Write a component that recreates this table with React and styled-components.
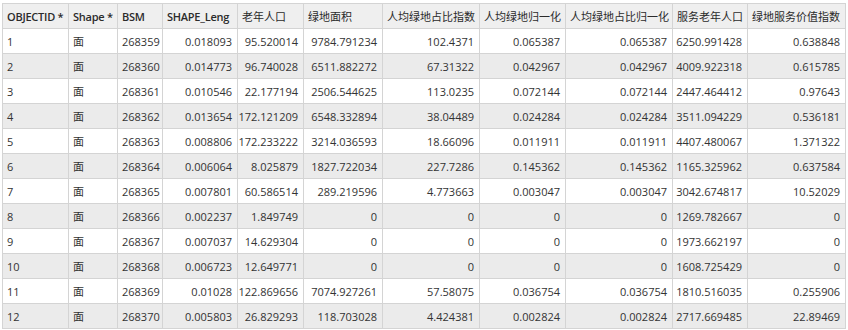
import React from "react";
import styled, { createGlobalStyle } from "styled-components";

const GlobalStyle = createGlobalStyle`
  html, body {
    margin: 0;
    padding: 0;
    background: #ffffff;
  }
`;

const columns = [
  { key: "oid", label: "OBJECTID *", width: 66, align: "left", latin: true },
  { key: "shape", label: "Shape *", width: 49, align: "left", latin: true },
  { key: "bsm", label: "BSM", width: 45, align: "left", latin: true },
  { key: "len", label: "SHAPE_Leng", width: 75, align: "right", latin: true },
  { key: "old", label: "老年人口", width: 66, align: "right" },
  { key: "area", label: "绿地面积", width: 79, align: "right" },
  { key: "ratio", label: "人均绿地占比指数", width: 97, align: "right" },
  { key: "norm", label: "人均绿地归一化", width: 86, align: "right" },
  { key: "ratioNorm", label: "人均绿地占比归一化", width: 107, align: "right" },
  { key: "served", label: "服务老年人口", width: 75, align: "right" },
  { key: "value", label: "绿地服务价值指数", width: 98, align: "right" },
];

const rows = [
  ["1", "面", "268359", "0.018093", "95.520014", "9784.791234", "102.4371", "0.065387", "0.065387", "6250.991428", "0.638848"],
  ["2", "面", "268360", "0.014773", "96.740028", "6511.882272", "67.31322", "0.042967", "0.042967", "4009.922318", "0.615785"],
  ["3", "面", "268361", "0.010546", "22.177194", "2506.544625", "113.0235", "0.072144", "0.072144", "2447.464412", "0.97643"],
  ["4", "面", "268362", "0.013654", "172.121209", "6548.332894", "38.04489", "0.024284", "0.024284", "3511.094229", "0.536181"],
  ["5", "面", "268363", "0.008806", "172.233222", "3214.036593", "18.66096", "0.011911", "0.011911", "4407.480067", "1.371322"],
  ["6", "面", "268364", "0.006064", "8.025879", "1827.722034", "227.7286", "0.145362", "0.145362", "1165.325962", "0.637584"],
  ["7", "面", "268365", "0.007801", "60.586514", "289.219596", "4.773663", "0.003047", "0.003047", "3042.674817", "10.52029"],
  ["8", "面", "268366", "0.002237", "1.849749", "0", "0", "0", "0", "1269.782667", "0"],
  ["9", "面", "268367", "0.007037", "14.629304", "0", "0", "0", "0", "1973.662197", "0"],
  ["10", "面", "268368", "0.006723", "12.649771", "0", "0", "0", "0", "1608.725429", "0"],
  ["11", "面", "268369", "0.01028", "122.869656", "7074.927261", "57.58075", "0.036754", "0.036754", "1810.516035", "0.255906"],
  ["12", "面", "268370", "0.005803", "26.829293", "118.703028", "4.424381", "0.002824", "0.002824", "2717.669485", "22.89469"],
];

const App = () => {
  const template = columns.map((c) => `${c.width}px`).join(" ");

  return (
    <>
      <GlobalStyle />
      <TableGrid $template={template}>
        {columns.map((col) => (
          <HeaderCell key={col.key} $latin={col.latin}>
            {col.label}
          </HeaderCell>
        ))}
        {rows.map((row, i) =>
          row.map((value, j) => (
            <DataCell
              key={`${i}-${j}`}
              $align={columns[j].align}
              $striped={i % 2 === 1}
            >
              {value}
            </DataCell>
          ))
        )}
      </TableGrid>
    </>
  );
};

export default App;

const TableGrid = styled.div`
  display: grid;
  grid-template-columns: ${({ $template }) => $template};
  grid-auto-rows: 25px;
  width: max-content;
  margin: 3px 0 0 2px;
  border-top: 1px solid #d4d4d4;
  border-left: 1px solid #d4d4d4;
  font-family: "Open Sans", "Noto Sans CJK SC", sans-serif;
  font-size: 11px;
  color: #333333;
`;

const Cell = styled.div`
  box-sizing: border-box;
  display: flex;
  align-items: center;
  padding: 0 5px 0 4px;
  border-right: 1px solid #d4d4d4;
  border-bottom: 1px solid #d4d4d4;
  white-space: nowrap;
  overflow: hidden;
`;

const HeaderCell = styled(Cell)`
  background: #efefef;
  justify-content: flex-start;
  font-weight: ${({ $latin }) => ($latin ? 600 : 400)};
  letter-spacing: ${({ $latin }) => ($latin ? "-0.25px" : "0")};
  color: #2b2b2b;
`;

const DataCell = styled(Cell)`
  background: ${({ $striped }) => ($striped ? "#ebebeb" : "#ffffff")};
  justify-content: ${({ $align }) =>
    $align === "right" ? "flex-end" : "flex-start"};
`;
